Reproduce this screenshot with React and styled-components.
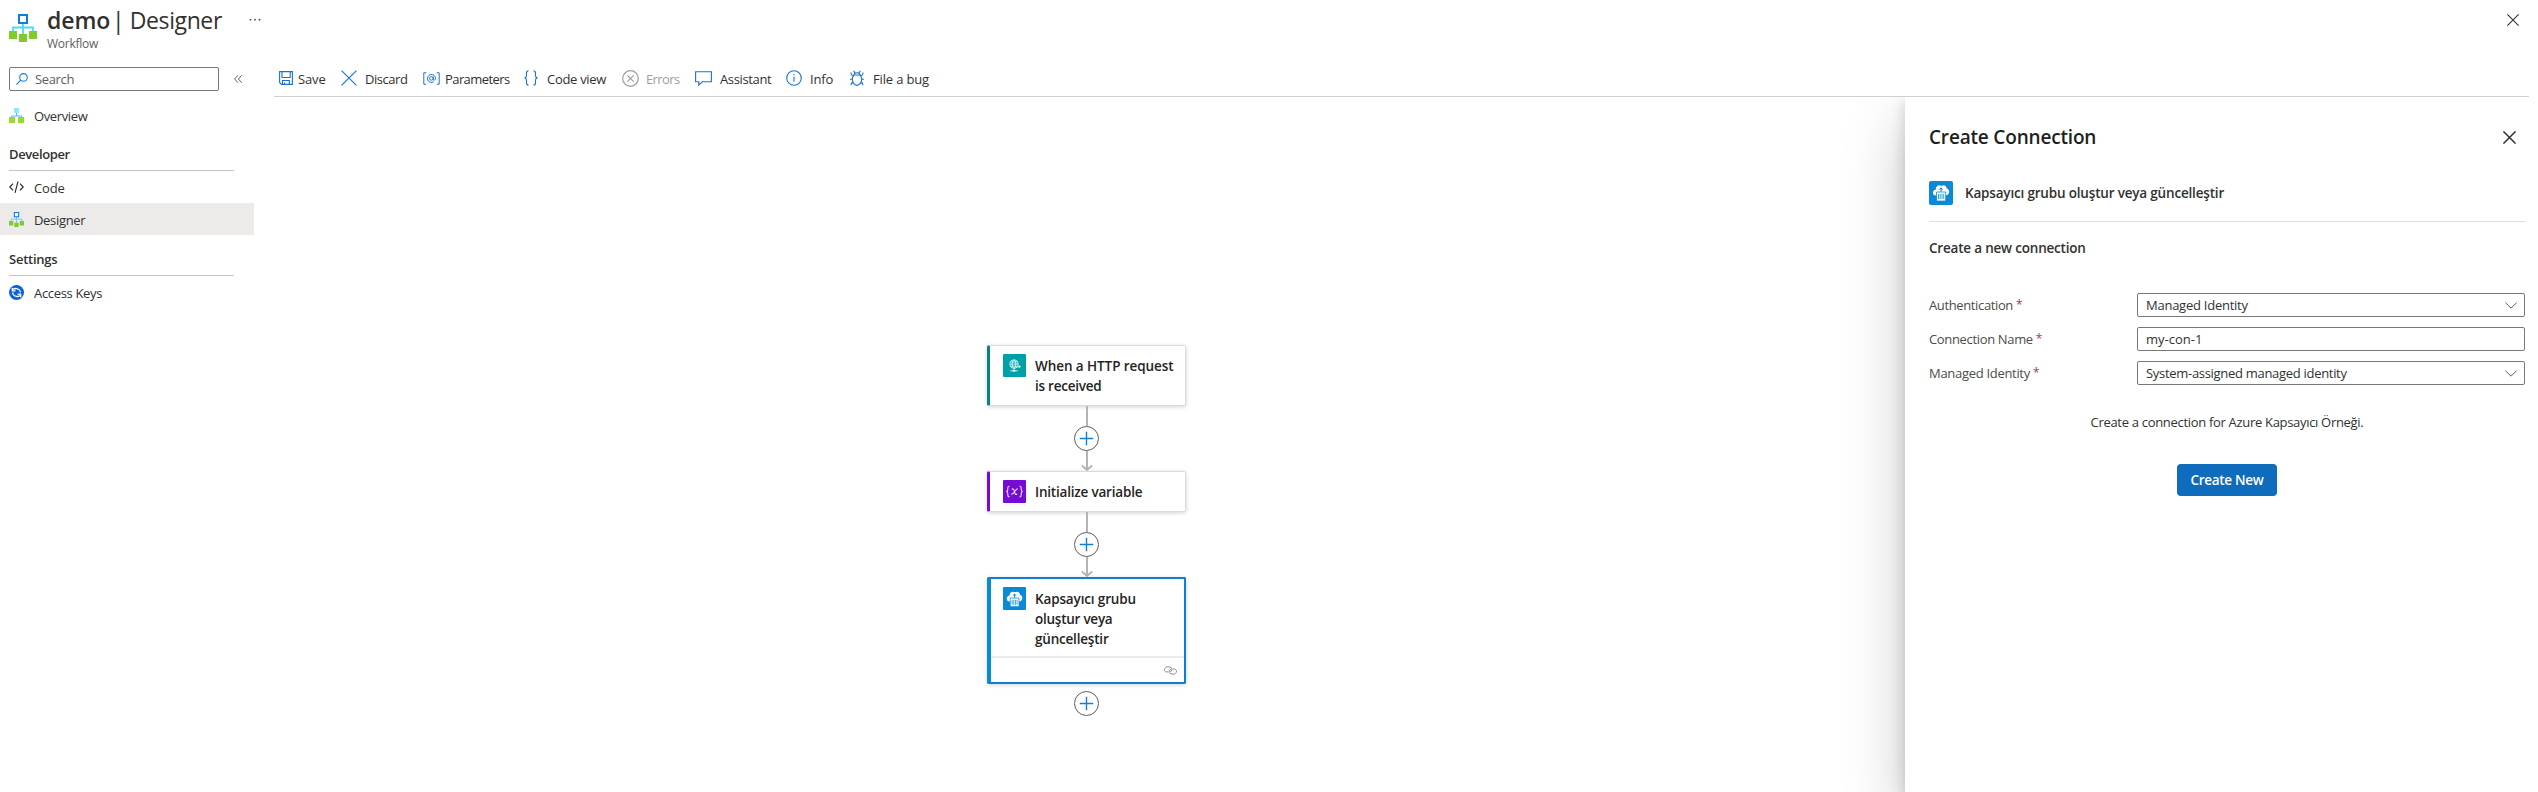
import React from "react";
import styled, { createGlobalStyle } from "styled-components";

const GlobalStyle = createGlobalStyle`
  *, *::before, *::after { box-sizing: border-box; }
  body {
    margin: 0;
    background: #fff;
    color: #323130;
    font-family: "Open Sans", "Noto Sans", sans-serif;
    font-size: 13px;
  }
  button, input { font: inherit; color: inherit; letter-spacing: inherit; }
`;

const Page = styled.div`
  height: 792px;
  display: flex;
  flex-direction: column;
  overflow: hidden;
`;

const Label = styled.span`
  white-space: nowrap;
  letter-spacing: ${(p) => p.$ls ?? -0.26}px;
`;

/* ---------- Header ---------- */

const Header = styled.header`
  height: 60px;
  padding: 0 19px 0 9px;
  display: flex;
  align-items: flex-start;
  flex-shrink: 0;
`;

const HeaderIcon = styled.div`
  width: 28px;
  height: 28px;
  margin: 14px 10px 0 0;
`;

const Titles = styled.div`
  width: 176px;
  padding-top: 4px;
`;

const Title = styled.h1`
  margin: 0;
  display: flex;
  font-size: 23px;
  font-weight: 400;
  line-height: 32px;
  white-space: pre;
`;

const ResourceName = styled.span`
  width: 65px;
  font-weight: 600;
  letter-spacing: -0.05px;
`;

const BladeName = styled.span`
  letter-spacing: -0.4px;
`;

const Subtitle = styled.div`
  font-size: 12px;
  line-height: 16px;
  color: #605e5c;
  letter-spacing: -0.27px;
`;

const MoreButton = styled.button`
  display: flex;
  margin: 18px 0 0 26px;
  padding: 0;
  border: 0;
  background: none;
`;

const CloseBlade = styled.button`
  display: flex;
  margin: 14px 0 0 auto;
  padding: 0;
  border: 0;
  background: none;
`;

/* ---------- Side navigation ---------- */

const Body = styled.div`
  flex: 1;
  min-height: 0;
  display: flex;
`;

const Sidebar = styled.nav`
  width: 254px;
  flex-shrink: 0;
  padding-top: 7px;
`;

const SearchRow = styled.div`
  display: flex;
  align-items: center;
  gap: 15px;
  padding-left: 9px;
  margin-bottom: 8px;
`;

const SearchBox = styled.div`
  width: 210px;
  height: 24px;
  padding-left: 6px;
  display: flex;
  align-items: center;
  gap: 7px;
  border: 1px solid #7a7877;
  border-radius: 2px;
  color: #605e5c;
`;

const NavItem = styled.a`
  height: 32px;
  padding-left: 9px;
  display: flex;
  align-items: center;
  gap: 10px;
  background: ${(p) => (p.$active ? "#edebe9" : "transparent")};

  svg { flex-shrink: 0; }
  ${Label} { padding-top: 2px; }
`;

const NavHeading = styled.h2`
  height: ${(p) => p.$height}px;
  margin: 0 20px 0 9px;
  padding-bottom: 6px;
  display: flex;
  align-items: flex-end;
  border-bottom: 1px solid #c8c6c4;
  font-size: 13px;
  font-weight: 600;
  line-height: 20px;
`;

/* ---------- Toolbar ---------- */

const Main = styled.main`
  flex: 1;
  min-width: 0;
  padding-left: 14px;
  display: flex;
  flex-direction: column;
`;

const Toolbar = styled.div`
  height: 37px;
  margin: 0 9px 0 6px;
  padding-left: 5px;
  display: flex;
  flex-shrink: 0;
  border-bottom: 1px solid #d2d0ce;
`;

const Command = styled.button`
  width: ${(p) => p.$width}px;
  height: 36px;
  padding: 0;
  border: 0;
  background: none;
  display: flex;
  align-items: center;
  color: ${(p) => (p.disabled ? "#a19f9d" : "#323130")};

  ${Label} { padding-top: 2px; }
`;

const CommandIcon = styled.span`
  width: ${(p) => p.$width}px;
  height: 18px;
  flex-shrink: 0;
  display: flex;
  align-items: center;
`;

/* ---------- Designer ---------- */

const Workspace = styled.div`
  flex: 1;
  min-height: 0;
  display: flex;
`;

const Canvas = styled.div`
  flex: 1;
  display: flex;
  flex-direction: column;
  align-items: center;
  padding-top: 248px;
  overflow: hidden;
`;

const Card = styled.article`
  width: 199px;
  height: ${(p) => p.$height}px;
  display: flex;
  flex-direction: column;
  flex-shrink: 0;
  background: #fff;
  border: ${(p) => (p.$selected ? "2px solid #0f7fd6" : "1px solid #dddbda")};
  border-left: ${(p) => (p.$selected ? 4 : 3)}px solid ${(p) => p.$color};
  border-radius: 2px;
  box-shadow: 0 1px 4px rgba(0, 0, 0, 0.18);
`;

const CardBody = styled.div`
  flex: 1;
  display: flex;
  gap: 9px;
  padding: ${(p) => (p.$selected ? "8px 0 0 12px" : "8px 0 0 13px")};
`;

const CardTitle = styled.div`
  padding-top: 2px;
  display: flex;
  flex-direction: column;
  font-size: 13.5px;
  font-weight: 600;
  line-height: 20px;
  color: #252423;
`;

const CardFooter = styled.footer`
  height: 26px;
  padding-right: 7px;
  display: flex;
  align-items: center;
  justify-content: flex-end;
  border-top: 2px solid #edebe9;
`;

const IconTile = styled.div`
  width: ${(p) => p.$size ?? 24}px;
  height: ${(p) => p.$size ?? 24}px;
  flex-shrink: 0;
  display: flex;
  align-items: center;
  justify-content: center;
  border-radius: ${(p) => (p.$size ? 1 : 2)}px;
  background: ${(p) => p.$color};
`;

const Connector = styled.div`
  height: 65px;
  flex-shrink: 0;
  display: flex;
  flex-direction: column;
  align-items: center;
`;

const Line = styled.div`
  width: 2px;
  height: ${(p) => p.$height}px;
  background: #b5b3b8;
`;

const AddButton = styled.button`
  width: 25px;
  height: 25px;
  margin-top: ${(p) => p.$top ?? 0}px;
  padding: 0;
  flex-shrink: 0;
  display: flex;
  align-items: center;
  justify-content: center;
  border: 1px solid #5f5d60;
  border-radius: 50%;
  background: #fff;
`;

const ArrowEnd = styled.div`
  height: 20px;
  display: flex;
`;

/* ---------- Connection panel ---------- */

const Panel = styled.aside`
  width: 633px;
  flex-shrink: 0;
  padding: 23px 13px 0 24px;
  background: #fff;
  box-shadow: 0 26px 58px rgba(0, 0, 0, 0.22), 0 5px 14px rgba(0, 0, 0, 0.18);
  clip-path: inset(0 0 0 -80px);
`;

const PanelHeader = styled.div`
  height: 34px;
  padding-right: 9px;
  display: flex;
  align-items: center;
  justify-content: space-between;
`;

const PanelTitle = styled.h2`
  margin: 0;
  font-size: 19px;
  font-weight: 600;
  line-height: 28px;
  color: #201f1e;
`;

const Operation = styled.div`
  height: 68px;
  padding: 27px 0 17px;
  display: flex;
  align-items: center;
  gap: 12px;
  border-bottom: 1px solid #e1dfdd;
  font-size: 13.5px;
  font-weight: 600;
`;

const SectionTitle = styled.h3`
  margin: 16px 0 35px;
  font-size: 13.5px;
  font-weight: 600;
  line-height: 20px;
`;

const Form = styled.form`
  display: flex;
  flex-direction: column;
  gap: 10px;
`;

const Field = styled.div`
  display: grid;
  grid-template-columns: 208px 388px;
  align-items: center;
  height: 24px;
`;

const FieldLabel = styled.label`
  display: flex;
  gap: 3px;
  color: #4e4c4a;
`;

const Required = styled.span`
  font-size: 12px;
  line-height: 18px;
  color: #b3343b;
`;

const Control = styled.div`
  height: 24px;
  padding: 0 7px 0 8px;
  display: flex;
  align-items: center;
  justify-content: space-between;
  border: 1px solid #7a7877;
  border-radius: 2px;
`;

const Hint = styled.p`
  margin: 27px 0 32px;
  line-height: 20px;
  text-align: center;
`;

const Actions = styled.div`
  display: flex;
  justify-content: center;
`;

const PrimaryButton = styled.button`
  width: 100px;
  height: 32px;
  padding: 0;
  border: 0;
  border-radius: 4px;
  background: #0f6cbd;
  color: #fff;
  font-size: 13.5px;
  font-weight: 600;
`;

/* ---------- Icons ---------- */

const WorkflowIcon = ({ size }) => (
  <svg width={size} height={size} viewBox="0 0 28 28" fill="none">
    <path d="M14 9v12M4 18v-4.5h20V18" stroke="#50d9f5" strokeWidth="1.8" />
    <rect x="10" y="1" width="8" height="8" fill="#fff" stroke="#0f7fd6" strokeWidth="2" />
    <path d="M0 17h8v8H0zM10 20h8v8h-8zM20 17h8v8h-8z" fill="#7fcb2c" />
  </svg>
);

const OverviewIcon = () => (
  <svg width="15" height="15" viewBox="0 0 15 15" fill="none">
    <path d="M7.5 4v4M2.5 10V8h10v2" stroke="#5ab4e8" strokeWidth="1" />
    <path d="M5 0h5v5H5z" fill="#8beafa" />
    <path d="M0 9h6v6H0zM9 9h6v6H9z" fill="#96dc2c" />
  </svg>
);

const CodeIcon = () => (
  <svg width="15" height="15" viewBox="0 0 15 15" fill="none" stroke="#252423" strokeWidth="1.1">
    <path d="M4 3.7.8 7 4 10.3M11 3.7 14.2 7 11 10.3M9 1.5 6 12.8" />
  </svg>
);

const KeysIcon = () => (
  <svg width="15" height="15" viewBox="0 0 15 15" fill="none">
    <circle cx="7.5" cy="7.5" r="7.5" fill="#0b5fdb" />
    <path d="M4 4.6c2-1.7 5.4-1.4 6.800.9.500.8.600 1.300.5 2M11 10.400c-2 1.700-5.400 1.400-6.800-.9-.5-.8-.6-1.300-.5-2" stroke="#fff" strokeWidth="1.300" />
    <path d="M3.300 2.700v3.200h3.200M11.700 12.300V9.100H8.500" stroke="#fff" strokeWidth="1.300" />
  </svg>
);

const SearchIcon = () => (
  <svg width="12" height="12" viewBox="0 0 12 12" fill="none" stroke="#0f7fd6" strokeWidth="1.1">
    <circle cx="7.5" cy="4.4" r="3.8" />
    <path d="M4.7 7.2.4 11.6" />
  </svg>
);

const CollapseIcon = () => (
  <svg width="8" height="8" viewBox="0 0 8 8" fill="none" stroke="#605e5c" strokeWidth="1">
    <path d="M3.9.3.6 4l3.3 3.7M7.700.3 4.400 4l3.300 3.700" />
  </svg>
);

const MoreIcon = () => (
  <svg width="12" height="3" viewBox="0 0 12 3" fill="#484644">
    <circle cx="1.500" cy="1.700" r=".9" />
    <circle cx="6" cy="1.700" r=".9" />
    <circle cx="10.500" cy="1.700" r=".9" />
  </svg>
);

const CrossIcon = ({ size = 12, color = "#323130", weight = 1.1 }) => (
  <svg width={size} height={size} viewBox="0 0 12 12" fill="none" stroke={color} strokeWidth={weight}>
    <path d="m.4.4 11.200 11.200M11.600.4.4 11.600" />
  </svg>
);

const blue = { fill: "none", stroke: "#1a73cf", strokeWidth: 1.1 };

const SaveIcon = () => (
  <svg width="14" height="14" viewBox="0 0 14 14" {...blue}>
    <path d="M.6.6h12.800v12.800H2.500L.6 11.500zM3 .6v5.900h8.200V.6M3.500 13.400V9.500h6.800v3.900M5.500 13.400v-2" />
  </svg>
);

const ParametersIcon = () => (
  <svg width="17" height="13" viewBox="0 0 17 13" {...blue} strokeWidth="1">
    <path d="M3.300.8H.8v11.400h2.500M13.700.8h2.500v11.400h-2.500" />
    <circle cx="8.400" cy="6.400" r="1.800" />
    <path d="M10.200 4.500v2.900c0 1.300 2.300 1.200 2.300-1A4 4 0 1 0 10.700 9.800" />
  </svg>
);

const BracesIcon = () => (
  <svg width="14" height="16" viewBox="0 0 14 16" {...blue}>
    <path d="M4.500.7C2.600.7 2.500 1.500 2.500 3v2.500C2.500 7 2 7.700.6 7.900c1.400.2 1.900.9 1.900 2.400v2.500c0 1.500.1 2.300 2 2.300M9.500.7c1.900 0 2 .8 2 2.300v2.500c0 1.500.5 2.200 1.900 2.400-1.400.2-1.900.9-1.900 2.400v2.500c0 1.500-.1 2.300-2 2.300" />
  </svg>
);

const ErrorsIcon = () => (
  <svg width="17" height="17" viewBox="0 0 17 17" fill="none" stroke="#a19f9d" strokeWidth="1.200">
    <circle cx="8.500" cy="8.500" r="7.800" />
    <path d="m5.300 5.300 6.400 6.400M11.700 5.300l-6.400 6.400" />
  </svg>
);

const ChatIcon = () => (
  <svg width="17" height="15" viewBox="0 0 17 15" {...blue}>
    <path d="M.6.8h15.800v10H7.200l-3.400 3.300v-3.300H.6z" />
  </svg>
);

const InfoIcon = () => (
  <svg width="16" height="16" viewBox="0 0 16 16" {...blue}>
    <circle cx="8" cy="8" r="7.300" />
    <path d="M8 6.500v5.300M8 4v1.300" />
  </svg>
);

const BugIcon = () => (
  <svg width="14" height="16" viewBox="0 0 14 16" {...blue}>
    <path d="M4 5C4 2 10 2 10 5M4 5h6c2.300 2.300 2.300 7-.4 9.200-1.500 1.300-3.700 1.300-5.200 0C1.700 12 1.700 7.300 4 5zM5 3 3.700.7M9 3 10.300.7M3.200 6.200C1.500 5.500.8 4.500.9 2.500M10.800 6.200c1.700-.7 2.400-1.700 2.300-3.700M2.400 9.200H0M11.600 9.200H14M3 12c-1.500.5-2 1.500-2 3.300M11 12c1.500.5 2 1.500 2 3.300" />
  </svg>
);

const RequestIcon = () => (
  <svg width="24" height="24" viewBox="0 0 24 24" fill="none" stroke="#d9f7f7" strokeWidth=".9">
    <circle cx="11.500" cy="10" r="4.300" />
    <ellipse cx="11.500" cy="10" rx="1.900" ry="4.300" />
    <path d="M7.200 10h8.600M7.900 7.800h7.200M7.900 12.200h7.200M11.500 14.300v2.500M7.500 17h8M15 13.300l2.500-.8" />
    <circle cx="17.300" cy="12.600" r=".8" fill="#d9f7f7" />
    <path d="M10 17h3" strokeWidth="1.800" />
  </svg>
);

const VariableIcon = () => (
  <svg width="23" height="23" viewBox="0 0 23 23" fill="none" stroke="#efe0ff" strokeWidth="1.100">
    <path d="M6.500 6c-1.600 0-1.700.8-1.700 2v1.500c0 1.200-.4 1.800-1.500 2 1.100.2 1.500.8 1.500 2V15c0 1.200.1 2 1.700 2M16.500 6c1.600 0 1.700.8 1.700 2v1.500c0 1.200.4 1.800 1.500 2-1.100.2-1.500.8-1.500 2V15c0 1.200-.1 2-1.700 2" />
    <path d="M8.700 9.200c1.700-1 2.200.3 2.800 2.600.5 2 1 3.400 2.600 2.200M14.700 8.900c-2.200-.6-3.500 5.800-6.400 5.200" />
  </svg>
);

const ContainerIcon = () => (
  <svg width="24" height="24" viewBox="0 0 24 24" fill="none">
    <path d="M7 14.500C3 14.500 3 9 6.700 8.700 6.700 5 10 3.300 12.300 5c2.400-1.600 5.300-.2 5.500 2.600 3.500.8 3 6.700-.8 6.900z" fill="#fff" />
    <path d="M7.500 11h9.200v9H7.500z" fill="#fff" stroke="#0a8ad6" strokeWidth=".8" />
    <path d="M9.500 12.800V18M11.200 12.800V18M13 12.800V18M14.700 12.800V18" stroke="#0a8ad6" strokeWidth=".8" />
    <path d="M12.100 10.700V7M10.600 8.500l1.500-1.600 1.500 1.600" stroke="#0a70b8" strokeWidth="1" />
  </svg>
);

const LinkIcon = () => (
  <svg width="13" height="9" viewBox="0 0 13 9" fill="none" stroke="#8a8886" strokeWidth="1">
    <path d="M4 5.800C1.800 6.500.5 5.200.5 3.700.5 2 2 .8 4.200.8c2.600 0 4.300 1.500 3.800 3.200-.2.900-.9 1.500-1.800 1.700" />
    <path d="M9 3c2-.5 3.500.8 3.500 2.300 0 1.700-1.500 2.900-3.700 2.900-2.600 0-4.200-1.500-3.700-3.200.2-.9.900-1.500 1.800-1.700" />
  </svg>
);

const PlusIcon = () => (
  <svg width="15" height="15" viewBox="0 0 15 15" fill="none" stroke="#0f7fd6" strokeWidth="1.400">
    <path d="M7.500.8v13.400M.8 7.500h13.400" />
  </svg>
);

const ArrowIcon = () => (
  <svg width="12" height="20" viewBox="0 0 12 20" fill="none" stroke="#b5b3b8" strokeWidth="2">
    <path d="M6 0v19M.8 14.500 6 18.800l5.200-4.300" />
  </svg>
);

const ChevronIcon = () => (
  <svg width="12" height="7" viewBox="0 0 12 7" fill="none" stroke="#605e5c" strokeWidth="1">
    <path d="m.4.6 5.600 5.600L11.600.6" />
  </svg>
);

/* ---------- Page content ---------- */

const commands = [
  { text: "Save", icon: <SaveIcon />, iconWidth: 19, width: 62, ls: -0.15 },
  { text: "Discard", icon: <CrossIcon size={16} color="#1a73cf" weight={0.85} />, iconWidth: 24, width: 82, ls: -0.45 },
  { text: "Parameters", icon: <ParametersIcon />, iconWidth: 22, width: 101, ls: -0.58 },
  { text: "Code view", icon: <BracesIcon />, iconWidth: 23, width: 98, ls: -0.3 },
  { text: "Errors", icon: <ErrorsIcon />, iconWidth: 24, width: 73, ls: -0.6, disabled: true },
  { text: "Assistant", icon: <ChatIcon />, iconWidth: 25, width: 91, ls: -0.35 },
  { text: "Info", icon: <InfoIcon />, iconWidth: 24, width: 64, ls: -0.2 },
  { text: "File a bug", icon: <BugIcon />, iconWidth: 23, width: 90, ls: -0.16 },
];

const fields = [
  { label: "Authentication", labelLs: -0.37, value: "Managed Identity", ls: -0.25, select: true },
  { label: "Connection Name", labelLs: -0.34, value: "my-con-1", ls: 0 },
  { label: "Managed Identity", labelLs: -0.3, value: "System-assigned managed identity", ls: -0.3, select: true },
];

const Step = () => (
  <Connector>
    <Line $height={20} />
    <AddButton aria-label="Add"><PlusIcon /></AddButton>
    <ArrowEnd><ArrowIcon /></ArrowEnd>
  </Connector>
);

export default function App() {
  return (
    <Page>
      <GlobalStyle />
      <Header>
        <HeaderIcon><WorkflowIcon size={28} /></HeaderIcon>
        <Titles>
          <Title>
            <ResourceName>demo</ResourceName>
            <BladeName>| Designer</BladeName>
          </Title>
          <Subtitle>Workflow</Subtitle>
        </Titles>
        <MoreButton aria-label="More"><MoreIcon /></MoreButton>
        <CloseBlade aria-label="Close"><CrossIcon /></CloseBlade>
      </Header>

      <Body>
        <Sidebar>
          <SearchRow>
            <SearchBox>
              <SearchIcon />
              <Label $ls={-0.36}>Search</Label>
            </SearchBox>
            <CollapseIcon />
          </SearchRow>
          <NavItem><OverviewIcon /><Label $ls={-0.38}>Overview</Label></NavItem>
          <NavHeading $height={40}><Label $ls={-0.38}>Developer</Label></NavHeading>
          <NavItem><CodeIcon /><Label $ls={-0.15}>Code</Label></NavItem>
          <NavItem $active><WorkflowIcon size={15} /><Label $ls={-0.32}>Designer</Label></NavItem>
          <NavHeading $height={41}><Label $ls={-0.25}>Settings</Label></NavHeading>
          <NavItem><KeysIcon /><Label $ls={-0.33}>Access Keys</Label></NavItem>
        </Sidebar>

        <Main>
          <Toolbar>
            {commands.map((c) => (
              <Command key={c.text} $width={c.width} disabled={c.disabled}>
                <CommandIcon $width={c.iconWidth}>{c.icon}</CommandIcon>
                <Label $ls={c.ls}>{c.text}</Label>
              </Command>
            ))}
          </Toolbar>

          <Workspace>
            <Canvas>
              <Card $height={61} $color="#038387">
                <CardBody>
                  <IconTile $size={23} $color="#00a0a8"><RequestIcon /></IconTile>
                  <CardTitle>
                    <Label $ls={-0.08}>When a HTTP request</Label>
                    <Label $ls={-0.25}>is received</Label>
                  </CardTitle>
                </CardBody>
              </Card>
              <Step />
              <Card $height={41} $color="#770bd6">
                <CardBody>
                  <IconTile $size={23} $color="#770bd6"><VariableIcon /></IconTile>
                  <CardTitle><Label $ls={-0.2}>Initialize variable</Label></CardTitle>
                </CardBody>
              </Card>
              <Step />
              <Card $height={107} $color="#0a8ad6" $selected>
                <CardBody $selected>
                  <IconTile $size={23} $color="#0a8ad6"><ContainerIcon /></IconTile>
                  <CardTitle>
                    <Label $ls={-0.14}>Kapsayıcı grubu</Label>
                    <Label $ls={-0.25}>oluştur veya</Label>
                    <Label $ls={-0.2}>güncelleştir</Label>
                  </CardTitle>
                </CardBody>
                <CardFooter><LinkIcon /></CardFooter>
              </Card>
              <AddButton $top={7} aria-label="Add"><PlusIcon /></AddButton>
            </Canvas>

            <Panel>
              <PanelHeader>
                <PanelTitle><Label $ls={-0.18}>Create Connection</Label></PanelTitle>
                <CrossIcon size={13} weight={1.4} />
              </PanelHeader>
              <Operation>
                <IconTile $color="#0a8ad6"><ContainerIcon /></IconTile>
                <Label $ls={-0.18}>Kapsayıcı grubu oluştur veya güncelleştir</Label>
              </Operation>
              <SectionTitle><Label $ls={-0.2}>Create a new connection</Label></SectionTitle>
              <Form>
                {fields.map((f) => (
                  <Field key={f.label}>
                    <FieldLabel>
                      <Label $ls={f.labelLs}>{f.label}</Label>
                      <Required>*</Required>
                    </FieldLabel>
                    <Control>
                      <Label $ls={f.ls}>{f.value}</Label>
                      {f.select && <ChevronIcon />}
                    </Control>
                  </Field>
                ))}
              </Form>
              <Hint><Label $ls={-0.31}>Create a connection for Azure Kapsayıcı Örneği.</Label></Hint>
              <Actions>
                <PrimaryButton type="button"><Label $ls={-0.3}>Create New</Label></PrimaryButton>
              </Actions>
            </Panel>
          </Workspace>
        </Main>
      </Body>
    </Page>
  );
}
